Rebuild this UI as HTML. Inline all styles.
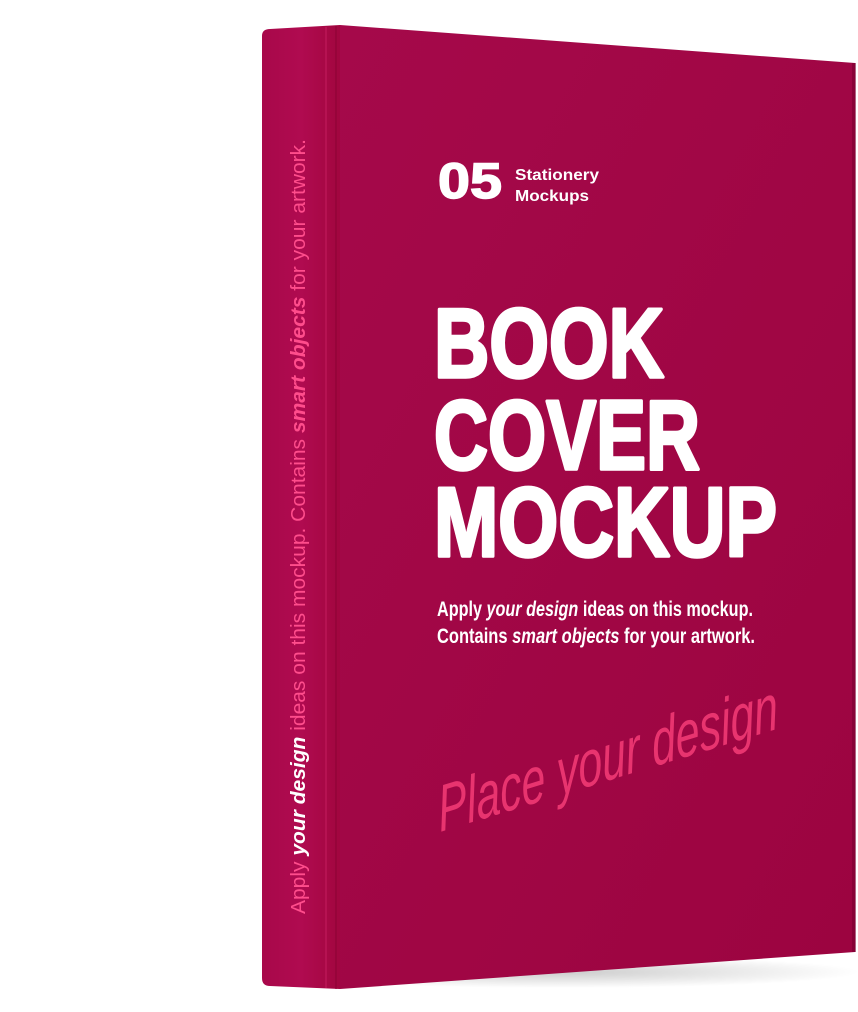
<!DOCTYPE html>
<html><head><meta charset="utf-8"><style>
html,body{margin:0;padding:0;background:#fff;width:858px;height:1012px;overflow:hidden}
svg{display:block}
</style></head><body>
<svg width="858" height="1012" viewBox="0 0 858 1012" xmlns="http://www.w3.org/2000/svg">
<defs>
<linearGradient id="cv" x1="0" y1="0" x2="1" y2="1">
<stop offset="0" stop-color="#a5094a"/><stop offset="1" stop-color="#9c0440"/>
</linearGradient>
<linearGradient id="sp" x1="0" y1="0" x2="1" y2="0">
<stop offset="0" stop-color="#a8084a"/><stop offset="0.5" stop-color="#b00b50"/><stop offset="1" stop-color="#a2063f"/>
</linearGradient>
<radialGradient id="sh" cx="0.5" cy="0.5" r="0.5">
<stop offset="0" stop-color="#000" stop-opacity="0.2"/><stop offset="1" stop-color="#000" stop-opacity="0"/>
</radialGradient>
</defs>
<ellipse cx="560" cy="972" rx="300" ry="16" fill="url(#sh)"/>
<path d="M262,36 Q262,29 270,29 L340,25 L340,989 L270,986 Q262,986 262,978 Z" fill="url(#sp)"/>
<path d="M340,25 L855,63 L855,952 L340,989 Z" fill="url(#cv)"/>
<rect x="852" y="63" width="4" height="889" fill="#7a0030" opacity="0.6"/>
<line x1="326" y1="27" x2="326" y2="988" stroke="#c01a5c" stroke-width="2" opacity="0.6"/>
<line x1="336" y1="26" x2="336" y2="989" stroke="#8c0235" stroke-width="2" opacity="0.5"/>
<g font-family="Liberation Sans, sans-serif" font-weight="bold" fill="#fff">
<text x="438" y="198" font-size="50" textLength="64" lengthAdjust="spacingAndGlyphs" stroke="#fff" stroke-width="1.5">05</text>
<text x="515" y="180" font-size="16" textLength="84" lengthAdjust="spacingAndGlyphs">Stationery</text>
<text x="515" y="201" font-size="16" textLength="74" lengthAdjust="spacingAndGlyphs">Mockups</text>
<g stroke="#fff" stroke-width="3.5" stroke-linejoin="round">
<text x="434" y="377" font-size="98" textLength="230" lengthAdjust="spacingAndGlyphs">BOOK</text>
<text x="434" y="469" font-size="98" textLength="266" lengthAdjust="spacingAndGlyphs">COVER</text>
<text x="434" y="556" font-size="98" textLength="343" lengthAdjust="spacingAndGlyphs">MOCKUP</text>
</g>
<text x="437" y="616" font-size="21" textLength="316" lengthAdjust="spacingAndGlyphs">Apply <tspan font-style="italic">your design</tspan> ideas on this mockup.</text>
<text x="437" y="643" font-size="21" textLength="318" lengthAdjust="spacingAndGlyphs">Contains <tspan font-style="italic">smart objects</tspan> for your artwork.</text>
</g>
<text transform="translate(440,832) rotate(-17) skewX(-12)" font-family="Liberation Sans Narrow, Liberation Sans, sans-serif" font-style="italic" font-size="64" fill="#e8346f" textLength="355" lengthAdjust="spacingAndGlyphs">Place your design</text>
<text transform="translate(305,914) rotate(-90)" font-family="Liberation Sans, sans-serif" font-size="20" fill="#ff4d8c" textLength="775" lengthAdjust="spacingAndGlyphs">Apply <tspan fill="#fff" font-weight="bold" font-style="italic">your design</tspan> ideas on this mockup. Contains <tspan font-weight="bold" font-style="italic">smart objects</tspan> for your artwork.</text>
</svg>
</body></html>
